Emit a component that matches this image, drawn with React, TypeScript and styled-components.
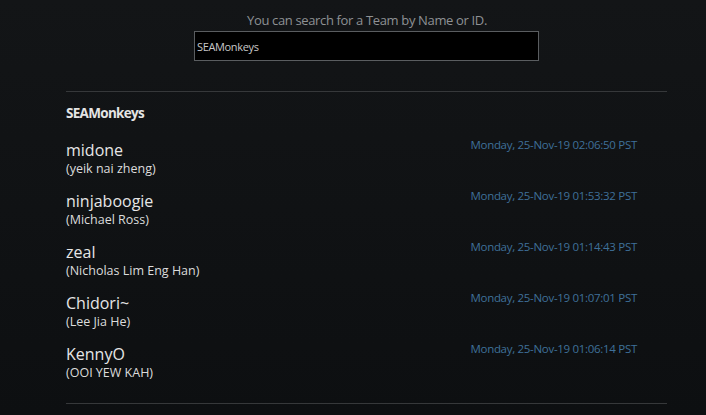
import React from "react";
import styled, { createGlobalStyle } from "styled-components";

const Global = createGlobalStyle`
  html, body { margin: 0; padding: 0; background: #0f1113; }
  body { font-family: "Open Sans", "Noto Sans", sans-serif; color: #ddd; }
`;

const Page = styled.div`
  width: 706px;
  height: 415px;
  background: linear-gradient(180deg, #131517 0%, #0d0f11 100%);
  display: flex;
  flex-direction: column;
  align-items: center;
  overflow: hidden;
`;

const Hint = styled.div`
  margin-top: 11px;
  font-size: 13px;
  color: #8e9194;
  letter-spacing: -0.35px;
  line-height: 18px;
  margin-left: 28px;
`;

const Search = styled.input`
  box-sizing: border-box;
  width: 345px;
  height: 30px;
  margin-top: 2px;
  margin-left: 27px;
  background: #000;
  border: 1px solid #5a5d60;
  color: #c8c8c8;
  font-family: inherit;
  font-size: 11px;
  letter-spacing: -0.35px;
  padding: 0 2px;
  outline: none;
`;

const Results = styled.section`
  box-sizing: border-box;
  width: 601px;
  margin-top: 30px;
  margin-left: 27px;
  border-top: 1px solid #36383a;
  border-bottom: 1px solid #36383a;
  padding: 12px 0 8px;
`;

const TeamName = styled.div`
  font-size: 13.5px;
  line-height: 18px;
  font-weight: 700;
  color: #e4e4e4;
  letter-spacing: -0.7px;
  margin-bottom: 18px;
`;

const Row = styled.div`
  display: flex;
  justify-content: space-between;
  align-items: flex-start;
  height: 51px;
`;

const Names = styled.div`
  display: flex;
  flex-direction: column;
`;

const Nick = styled.div`
  font-size: 16px;
  line-height: 20px;
  color: #e6e6e6;
`;

const Real = styled.div`
  font-size: 12.5px;
  line-height: 17px;
  color: #dcdcdc;
`;

const When = styled.div`
  font-size: 11.5px;
  line-height: 16px;
  color: #3f7099;
  letter-spacing: -0.3px;
  margin-top: -3px;
  margin-right: 30px;
`;

const members = [
  ["midone", "(yeik nai zheng)", "Monday, 25-Nov-19 02:06:50 PST"],
  ["ninjaboogie", "(Michael Ross)", "Monday, 25-Nov-19 01:53:32 PST"],
  ["zeal", "(Nicholas Lim Eng Han)", "Monday, 25-Nov-19 01:14:43 PST"],
  ["Chidori~", "(Lee Jia He)", "Monday, 25-Nov-19 01:07:01 PST"],
  ["KennyO", "(OOI YEW KAH)", "Monday, 25-Nov-19 01:06:14 PST"],
];

export default function App() {
  return (
    <>
      <Global />
      <Page>
        <Hint>You can search for a Team by Name or ID.</Hint>
        <Search defaultValue="SEAMonkeys" />
        <Results>
          <TeamName>SEAMonkeys</TeamName>
          {members.map(([n, r, d]) => (
            <Row key={n}>
              <Names>
                <Nick>{n}</Nick>
                <Real>{r}</Real>
              </Names>
              <When>{d}</When>
            </Row>
          ))}
        </Results>
      </Page>
    </>
  );
}
